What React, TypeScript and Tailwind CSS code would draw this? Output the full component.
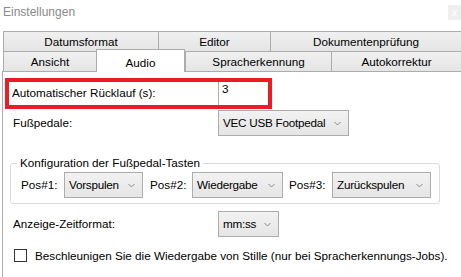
import React from "react";

const font = { fontFamily: '"Liberation Sans", Arial, sans-serif' };

function Chevron() {
  return (
    <svg width="7" height="5" viewBox="0 0 7 5" className="shrink-0">
      <polyline points="0.5,1 3.5,4 6.5,1" fill="none" stroke="#8a8a8a" strokeWidth="1" />
    </svg>
  );
}

function Select({ value, width }: { value: string; width: string }) {
  return (
    <div
      className={`${width} h-[26px] flex items-center justify-between gap-[3px] pl-[4px] pr-[7px] border border-[#acacac] bg-gradient-to-b from-[#f2f2f2] to-[#e5e5e5] text-black`}
    >
      <span className="whitespace-nowrap tracking-[-0.25px]">{value}</span>
      <Chevron />
    </div>
  );
}

function Tab({ label, width, selected }: { label: string; width: string; selected?: boolean }) {
  if (selected) {
    return (
      <div
        className={`${width} h-[23px] -mb-px relative z-10 flex items-start justify-center pt-[4px] bg-white border-l border-r border-t border-[#acacac] text-black`}
      >
        {label}
      </div>
    );
  }
  return (
    <div
      className={`${width} h-full flex items-center justify-center border-l border-t border-[#acacac] bg-gradient-to-b from-[#f0f0f0] to-[#e5e5e5] text-black`}
    >
      {label}
    </div>
  );
}

export default function App() {
  return (
    <div className="w-[461px] h-[277px] bg-white overflow-hidden relative flex flex-col text-[11.7px]" style={font}>
      <div className="h-[30px] pl-[3px] pt-[3px] text-[12px] text-[#8a8a8a]">Einstellungen</div>
      <div className="absolute right-0 top-[5px] w-[13px] h-[15px] bg-[#efefef] text-white text-[10px] flex items-center justify-center">
        x
      </div>

      <div className="ml-[3px] flex flex-col">
        <div className="flex h-[21px] pt-px">
          <Tab label="Datumsformat" width="w-[155px]" />
          <Tab label="Editor" width="w-[112px]" />
          <Tab label="Dokumentenprüfung" width="w-[191px]" />
        </div>
        <div className="flex h-[20px] items-end">
          <Tab label="Ansicht" width="w-[93px]" />
          <Tab label="Audio" width="w-[89px]" selected />
          <Tab label="Spracherkennung" width="w-[146px]" />
          <Tab label="Autokorrektur" width="w-[130px]" />
        </div>
      </div>

      <div className="ml-[2px] flex-1 border-l border-t border-[#acacac] flex flex-col text-black">
        <div className="mt-[6px] ml-[2px] w-[267px] h-[31px] border-[4px] border-[#ed1c24] flex items-stretch">
          <div className="flex-1 flex items-center pl-[3px] pb-[1px]">Automatischer Rücklauf (s):</div>
          <div className="w-[50px] border-l border-[#abadb3] pl-[3px] leading-[14px]">3</div>
        </div>

        <div className="mt-[1px] h-[26px] flex items-center">
          <div className="w-[215px] pl-[10px]">Fußpedale:</div>
          <Select value="VEC USB Footpedal" width="w-[131px]" />
        </div>

        <fieldset className="mt-[19px] ml-[7px] w-[430px] border border-[#dcdcdc] rounded-[3px] pl-[10px] pb-[5px]">
          <legend className="ml-[-4px] px-[3px] leading-[16px] text-black">Konfiguration der Fußpedal-Tasten</legend>
          <div className="mt-px flex items-center">
            <span className="w-[43px]">Pos#1:</span>
            <Select value="Vorspulen" width="w-[79px]" />
            <span className="ml-[7px] w-[42px]">Pos#2:</span>
            <Select value="Wiedergabe" width="w-[91px]" />
            <span className="ml-[6px] w-[43px]">Pos#3:</span>
            <Select value="Zurückspulen" width="w-[99px]" />
          </div>
        </fieldset>

        <div className="mt-[7px] h-[26px] flex items-center">
          <div className="w-[215px] pl-[10px]">Anzeige-Zeitformat:</div>
          <Select value="mm:ss" width="w-[61px]" />
        </div>

        <div className="mt-[10px] flex items-center pl-[11px] gap-[8px]">
          <div className="w-[13px] h-[13px] border border-[#333333] bg-white shrink-0" />
          <span className="whitespace-nowrap">
            Beschleunigen Sie die Wiedergabe von Stille (nur bei Spracherkennungs-Jobs).
          </span>
        </div>
      </div>
    </div>
  );
}
